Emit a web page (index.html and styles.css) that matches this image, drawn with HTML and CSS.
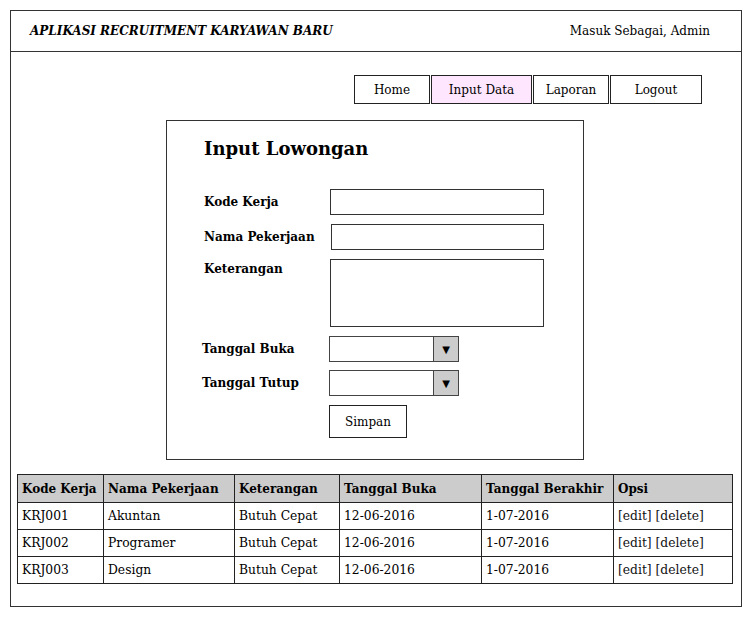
FILE: index.html
```html
<!DOCTYPE html>
<html>
<head>
<meta charset="utf-8">
<link rel="stylesheet" href="styles.css">
</head>
<body>
<div class="frame">
  <header class="header">
    <div class="app-title">APLIKASI RECRUITMENT KARYAWAN BARU</div>
    <div class="user">Masuk Sebagai, Admin</div>
  </header>
  <main class="main">
    <nav class="nav">
      <a class="nav-btn btn-home">Home</a>
      <a class="nav-btn btn-input active">Input Data</a>
      <a class="nav-btn btn-laporan">Laporan</a>
      <a class="nav-btn btn-logout">Logout</a>
    </nav>
    <section class="form-box">
      <h1 class="form-title">Input Lowongan</h1>
      <div class="form-grid">
        <label class="lbl">Kode Kerja</label>
        <div class="field"></div>
        <label class="lbl">Nama Pekerjaan</label>
        <div class="field field-shift"></div>
        <label class="lbl lbl-top">Keterangan</label>
        <div class="field textarea"></div>
        <label class="lbl lbl-left">Tanggal Buka</label>
        <div class="select"><span class="select-box"></span><span class="select-arrow">▼</span></div>
        <label class="lbl lbl-left lbl-up">Tanggal Tutup</label>
        <div class="select select-up"><span class="select-box"></span><span class="select-arrow">▼</span></div>
        <span></span>
        <div class="btn-simpan">Simpan</div>
      </div>
    </section>
    <table class="tbl">
      <colgroup>
        <col class="c1"><col class="c2"><col class="c3"><col class="c4"><col class="c5"><col class="c6">
      </colgroup>
      <thead>
        <tr><th>Kode Kerja</th><th>Nama Pekerjaan</th><th>Keterangan</th><th>Tanggal Buka</th><th>Tanggal Berakhir</th><th>Opsi</th></tr>
      </thead>
      <tbody>
        <tr><td>KRJ001</td><td>Akuntan</td><td>Butuh Cepat</td><td>12-06-2016</td><td>1-07-2016</td><td class="opsi">[edit] [delete]</td></tr>
        <tr><td>KRJ002</td><td>Programer</td><td>Butuh Cepat</td><td>12-06-2016</td><td>1-07-2016</td><td class="opsi">[edit] [delete]</td></tr>
        <tr><td>KRJ003</td><td>Design</td><td>Butuh Cepat</td><td>12-06-2016</td><td>1-07-2016</td><td class="opsi">[edit] [delete]</td></tr>
      </tbody>
    </table>
  </main>
</div>
</body>
</html>
```
FILE: styles.css
```css
* { box-sizing: border-box; }
html, body { margin: 0; padding: 0; background: #fff; }
body {
  padding: 10px 0 0 10px;
  font-family: "DejaVu Serif", serif;
  font-size: 12px;
  color: #000;
}
.frame {
  width: 732px;
  height: 597px;
  border: 1px solid #333;
  display: flex;
  flex-direction: column;
}
.header {
  height: 41px;
  border-bottom: 1px solid #333;
  display: flex;
  align-items: center;
  justify-content: space-between;
  padding: 0 31px 0 19px;
}
.app-title {
  font-weight: bold;
  font-style: italic;
  font-size: 12px;
}
.user { font-size: 12px; }
.main {
  flex: 1;
  display: flex;
  flex-direction: column;
  padding: 23px 8px 0 6px;
}
.nav {
  display: flex;
  justify-content: flex-end;
  gap: 1px;
  padding-right: 31px;
}
.nav-btn {
  height: 29px;
  border: 1px solid #222;
  display: flex;
  align-items: center;
  justify-content: center;
  background: #fff;
}
.btn-home { width: 76px; }
.btn-input { width: 101px; }
.btn-laporan { width: 76px; }
.btn-logout { width: 92px; }
.active { background: #ffe6ff; }
.form-box {
  align-self: center;
  margin: 16px 0 0 0;
  width: 418px;
  height: 340px;
  border: 1px solid #333;
  padding: 16px 0 0 37px;
}
.form-title {
  margin: 0;
  font-size: 18px;
  font-weight: bold;
  line-height: 24px;
}
.form-grid {
  margin-top: 28px;
  display: grid;
  grid-template-columns: 126px 214px;
  row-gap: 9px;
  align-items: center;
}
.lbl {
  font-weight: bold;
  font-size: 12px;
}
.lbl-top { align-self: start; padding-top: 3px; }
.lbl-left { margin-left: -2px; }
.lbl-up { margin-top: -2px; }
.field {
  height: 26px;
  border: 1px solid #333;
}
.field-shift { margin-left: 1px; }
.textarea { height: 68px; }
.select {
  width: 130px;
  height: 26px;
  border: 1px solid #444;
  display: flex;
  margin-left: -1px;
}
.select-up { margin-top: -1px; }
.select-box { flex: 1; }
.select-arrow {
  width: 25px;
  background: #ccc;
  border-left: 1px solid #444;
  display: flex;
  align-items: center;
  justify-content: center;
  font-size: 10px;
}
.btn-simpan {
  margin-left: -1px;
  width: 78px;
  height: 33px;
  border: 1px solid #222;
  display: flex;
  align-items: center;
  justify-content: center;
}
.tbl {
  margin-top: 14px;
  width: 716px;
  border-collapse: collapse;
  table-layout: fixed;
}
.c1 { width: 86px; }
.c2 { width: 131px; }
.c3 { width: 105px; }
.c4 { width: 142px; }
.c5 { width: 132px; }
.c6 { width: 119px; }
.tbl th, .tbl td {
  border: 1px solid #222;
  text-align: left;
  padding: 0 4px;
  height: 27px;
  white-space: nowrap;
  font-size: 12.3px;
}
.tbl th {
  background: #ccc;
  font-weight: bold;
  font-size: 12px;
  height: 28px;
}
.opsi { color: #111; }
```
